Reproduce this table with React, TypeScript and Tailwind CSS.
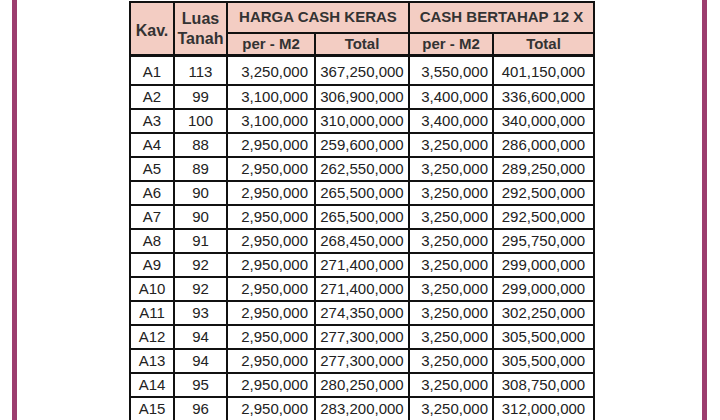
const rows: [string, number, string, string, string, string][] = [
  ["A1", 113, "3,250,000", "367,250,000", "3,550,000", "401,150,000"],
  ["A2", 99, "3,100,000", "306,900,000", "3,400,000", "336,600,000"],
  ["A3", 100, "3,100,000", "310,000,000", "3,400,000", "340,000,000"],
  ["A4", 88, "2,950,000", "259,600,000", "3,250,000", "286,000,000"],
  ["A5", 89, "2,950,000", "262,550,000", "3,250,000", "289,250,000"],
  ["A6", 90, "2,950,000", "265,500,000", "3,250,000", "292,500,000"],
  ["A7", 90, "2,950,000", "265,500,000", "3,250,000", "292,500,000"],
  ["A8", 91, "2,950,000", "268,450,000", "3,250,000", "295,750,000"],
  ["A9", 92, "2,950,000", "271,400,000", "3,250,000", "299,000,000"],
  ["A10", 92, "2,950,000", "271,400,000", "3,250,000", "299,000,000"],
  ["A11", 93, "2,950,000", "274,350,000", "3,250,000", "302,250,000"],
  ["A12", 94, "2,950,000", "277,300,000", "3,250,000", "305,500,000"],
  ["A13", 94, "2,950,000", "277,300,000", "3,250,000", "305,500,000"],
  ["A14", 95, "2,950,000", "280,250,000", "3,250,000", "308,750,000"],
  ["A15", 96, "2,950,000", "283,200,000", "3,250,000", "312,000,000"],
];

function PriceTable() {
  return (
    <div className="mt-[1px] ml-[112px] grid grid-cols-[42px_51px_86px_92px_82px_99px] grid-rows-[29px_21px_27px] auto-rows-[22px] gap-[2px] bg-[#111] p-[2px] self-start">
      {/* header */}
      <div className="row-span-2 flex items-center justify-center bg-[#f3cdc3] border-b border-[#111] pt-[5px] text-[16px] font-bold text-[#333]">
        Kav.
      </div>
      <div className="row-span-2 flex flex-col items-center justify-center bg-[#f3cdc3] border-b border-[#111] text-[16px] font-bold leading-[20px] text-[#333]">
        <span>Luas</span>
        <span>Tanah</span>
      </div>
      <div className="col-span-2 flex items-center justify-center bg-[#f3cdc3] text-[15px] font-bold text-[#333]">
        HARGA CASH KERAS
      </div>
      <div className="col-span-2 flex items-center justify-center bg-[#f3cdc3] text-[15px] font-bold text-[#333]">
        CASH BERTAHAP 12 X
      </div>
      <div className="flex items-center justify-center bg-[#f3cdc3] border-b border-[#111] text-[15px] font-bold text-[#333]">per - M2</div>
      <div className="flex items-center justify-center bg-[#f3cdc3] border-b border-[#111] text-[15px] font-bold text-[#333]">Total</div>
      <div className="flex items-center justify-center bg-[#f3cdc3] border-b border-[#111] text-[15px] font-bold text-[#333]">per - M2</div>
      <div className="flex items-center justify-center bg-[#f3cdc3] border-b border-[#111] text-[15px] font-bold text-[#333]">Total</div>

      {/* body */}
      {rows.map(([kav, luas, m2a, tota, m2b, totb], i) => {
        const align = i === 0 ? "items-end pb-[1px]" : "items-center";
        return [
          <div key={kav + "k"} className={`flex ${align} justify-center bg-white text-[15px] text-[#222]`}>{kav}</div>,
          <div key={kav + "l"} className={`flex ${align} justify-center bg-white text-[15px] text-[#222]`}>{luas}</div>,
          <div key={kav + "a"} className={`flex ${align} justify-end pr-[6px] bg-white text-[15px] text-[#222]`}>{m2a}</div>,
          <div key={kav + "b"} className={`flex ${align} justify-center bg-white text-[15px] text-[#222]`}>{tota}</div>,
          <div key={kav + "c"} className={`flex ${align} justify-end pr-[4px] bg-white text-[15px] text-[#222]`}>{m2b}</div>,
          <div key={kav + "d"} className={`flex ${align} justify-center bg-white text-[15px] text-[#222]`}>{totb}</div>,
        ];
      })}
    </div>
  );
}

export default function App() {
  return (
    <div className="flex w-[720px] h-[420px] overflow-hidden bg-white pl-[12px] font-['Liberation_Sans',Arial,sans-serif]">
      <div className="w-[5px] shrink-0 bg-[#9c3d6f]" />
      <PriceTable />
      <div className="ml-auto mr-[13px] w-[5px] shrink-0 bg-[#9c3d6f]" />
    </div>
  );
}
